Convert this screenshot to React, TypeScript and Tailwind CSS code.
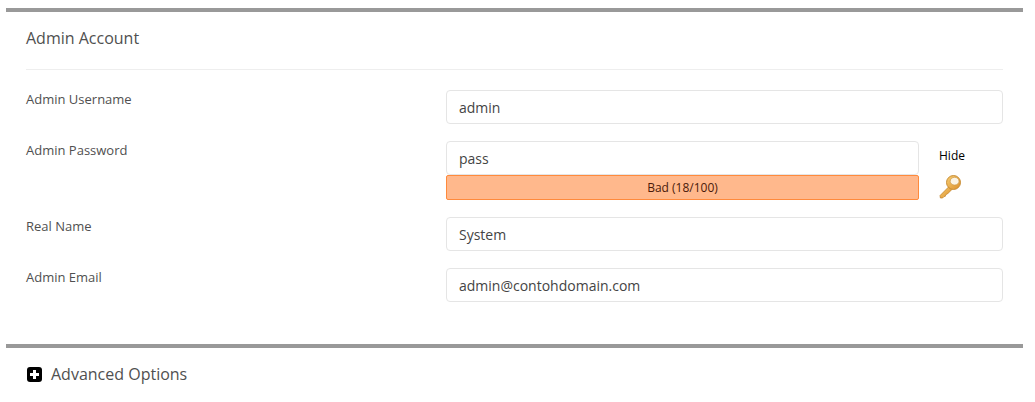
const FONT = "font-['Open_Sans',sans-serif]";

function KeyIcon() {
  return (
    <svg width="24" height="26" viewBox="0 0 24 26" aria-hidden>
      <defs>
        <linearGradient id="kg" x1="0" y1="0" x2="1" y2="1">
          <stop offset="0" stopColor="#f7cf75" />
          <stop offset="1" stopColor="#dc8f2a" />
        </linearGradient>
      </defs>
      <path d="M10.5 13 L1 22.6 L1.4 25 L3.6 25 L5 23.6 L6.4 23.2 L6.8 21.6 L8.4 21 L13 16.4" fill="url(#kg)" stroke="#bd7c24" strokeWidth="0.7" />
      <circle cx="14.5" cy="9.5" r="7" fill="url(#kg)" stroke="#c4872c" strokeWidth="0.9" />
      <ellipse cx="15.6" cy="8.2" rx="4.4" ry="3.9" fill="#fbf4e4" stroke="#cf9a48" strokeWidth="0.7" />
    </svg>
  );
}

function Campo({ valor, className = '' }: { valor: string; className?: string }) {
  return (
    <div className={`flex h-[34px] items-center rounded-[4px] border border-[#e5e5e5] bg-white px-3 text-[14px] text-[#444] ${className}`}>
      {valor}
    </div>
  );
}

function Linha({ rotulo, children, className = '' }: { rotulo: string; children: React.ReactNode; className?: string }) {
  return (
    <div className={`flex ${className}`}>
      <div className="w-[420px] shrink-0 text-[13px] leading-[18px] font-medium text-[#505050]">{rotulo}</div>
      <div className="min-w-0 grow">{children}</div>
    </div>
  );
}

export default function App() {
  return (
    <div className={`h-[402px] w-[1035px] overflow-hidden bg-white pt-2 pl-[6px] ${FONT}`}>
      <div className="w-[1017px]">
        <section className="border-t-4 border-[#999] px-5">
          <h2 className="flex h-[57px] items-center pb-[6px] text-[16px] font-medium text-[#505050]">Admin Account</h2>
          <div className="h-px bg-[#eeeeee]" />

          <Linha rotulo="Admin Username" className="mt-5">
            <Campo valor="admin" />
          </Linha>

          <Linha rotulo="Admin Password" className="mt-[17px]">
            <div className="flex">
              <div className="w-[473px]">
                <Campo valor="pass" />
                <div className="flex h-[25px] items-center justify-center rounded-[2px] border border-[#ff8a3c] bg-[#ffb88c] text-[12px] text-[#4a1a0a]">
                  Bad (18/100)
                </div>
              </div>
              <div className="ml-5 flex flex-col items-start">
                <span className="mt-[6px] text-[12px] leading-[18px] text-black">Hide</span>
                <span className="mt-[8px] block"><KeyIcon /></span>
              </div>
            </div>
          </Linha>

          <Linha rotulo="Real Name" className="mt-[17px]">
            <Campo valor="System" />
          </Linha>

          <Linha rotulo="Admin Email" className="mt-[17px]">
            <Campo valor="admin@contohdomain.com" />
          </Linha>
        </section>

        <section className="mt-[42px] border-t-4 border-[#999] px-5">
          <div className="flex h-[52px] items-center gap-[9px] text-[16px] font-medium text-[#505050]">
            <span className="relative ml-[1px] block h-[15px] w-[15px] rounded-[3px] bg-black">
              <span className="absolute top-[6px] left-[3px] h-[3px] w-[9px] bg-white" />
              <span className="absolute top-[3px] left-[6px] h-[9px] w-[3px] bg-white" />
            </span>
            Advanced Options
          </div>
        </section>
      </div>
    </div>
  );
}
